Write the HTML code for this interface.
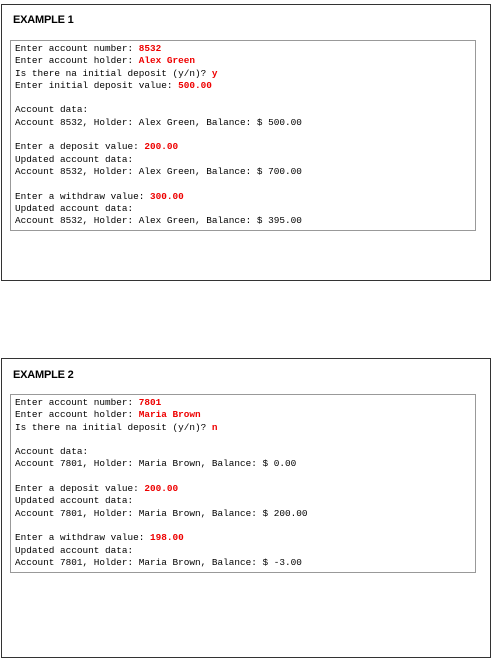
<!DOCTYPE html>
<html><head><style>
body{margin:0;width:499px;height:633px;background:#fff;position:relative;overflow:hidden}
.box{position:absolute;left:1px;width:490px;border:1px solid #333;box-sizing:border-box}
.t{position:absolute;left:13px;font:bold 11px "Liberation Sans",sans-serif;color:#000;letter-spacing:-0.2px}
.c{position:absolute;left:10px;width:466px;border:1px solid #999;box-sizing:border-box;padding:2px 0 0 4px;font:9.4px/12.3px "Liberation Mono",monospace;color:#000;white-space:pre}
.r{color:#e00;font-weight:bold}
</style></head><body>
<div class="box" style="top:4px;height:277px"></div>
<div class="t" style="top:14px">EXAMPLE 1</div>
<div class="c" style="top:40px;height:191px">Enter account number: <span class="r">8532</span>
Enter account holder: <span class="r">Alex Green</span>
Is there na initial deposit (y/n)? <span class="r">y</span>
Enter initial deposit value: <span class="r">500.00</span>

Account data:
Account 8532, Holder: Alex Green, Balance: $ 500.00

Enter a deposit value: <span class="r">200.00</span>
Updated account data:
Account 8532, Holder: Alex Green, Balance: $ 700.00

Enter a withdraw value: <span class="r">300.00</span>
Updated account data:
Account 8532, Holder: Alex Green, Balance: $ 395.00</div>
<div class="box" style="top:358px;height:300px"></div>
<div class="t" style="top:369px">EXAMPLE 2</div>
<div class="c" style="top:394px;height:179px">Enter account number: <span class="r">7801</span>
Enter account holder: <span class="r">Maria Brown</span>
Is there na initial deposit (y/n)? <span class="r">n</span>

Account data:
Account 7801, Holder: Maria Brown, Balance: $ 0.00

Enter a deposit value: <span class="r">200.00</span>
Updated account data:
Account 7801, Holder: Maria Brown, Balance: $ 200.00

Enter a withdraw value: <span class="r">198.00</span>
Updated account data:
Account 7801, Holder: Maria Brown, Balance: $ -3.00</div>
</body></html>
